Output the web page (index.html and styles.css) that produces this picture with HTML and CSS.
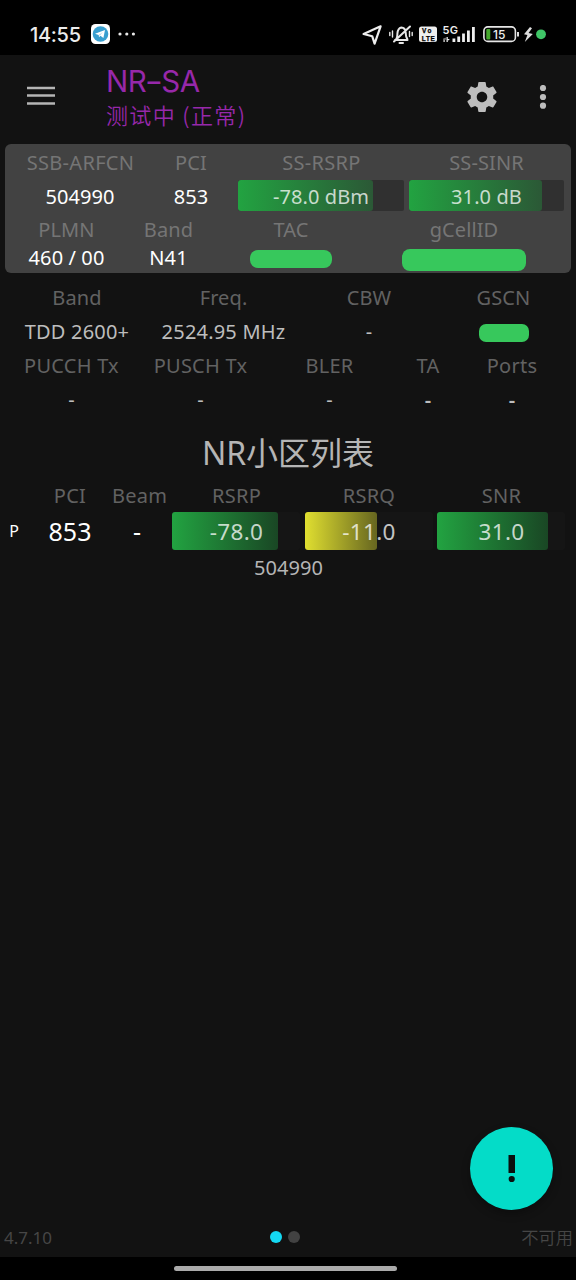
FILE: index.html
```html
<!DOCTYPE html>
<html lang="zh-CN">
<head>
<meta charset="utf-8">
<title>NR-SA</title>
<link rel="stylesheet" href="styles.css">
</head>
<body>
<div class="screen">
  <div class="status">
    <span class="clock">14:55</span>
    <svg class="tg" width="19" height="20" viewBox="0 0 19 20"><rect width="19" height="20" rx="4.5" fill="#fff"/><circle cx="9.5" cy="10" r="7.8" fill="#389fd0"/><path d="M4 9.8 14 5.900 12.400 14 9.400 11.800 8 13.200 7.700 11z" fill="#fff"/><path d="m7.800 11 4-3.100-3 3.600z" fill="#9fd0e8"/></svg>
    <svg class="more" width="18" height="4" viewBox="0 0 18 4"><g fill="#e8e8e8"><circle cx="2" cy="2" r="1.600"/><circle cx="8.800" cy="2" r="1.600"/><circle cx="15.400" cy="2" r="1.600"/></g></svg>
    <svg class="tray" width="188" height="24" viewBox="360 22 188 24">
      <path d="M380.600 26.300 363.600 34l8.600 2.200 2.400 7.400z" fill="none" stroke="#eee" stroke-width="2.200" stroke-linejoin="round"/>
      <g fill="none" stroke="#e6e6e6" stroke-width="2" stroke-linecap="round">
        <path d="M395 40h12.500M396 39.500c1.500-1.500 1.300-4 1.400-6 .3-3.400 1.700-5.500 3.900-6 2.400 0 4.200 2 4.400 5.500.1 2.500.3 4.500 1.600 6M394 41.500 410 26.500M399.500 43h3.500"/>
        <path d="M392.500 31v6M389.800 32.500v3M409.500 31.500v5M412.200 32.500v3" stroke-width="1.400"/>
      </g>
      <rect x="419" y="26.500" width="18" height="15.500" rx="2.500" fill="#eee"/>
      <text x="422" y="33.400" class="t-volte" textLength="9.500">Vo</text>
      <text x="421.800" y="41" class="t-volte" textLength="13">LTE</text>
      <text x="442.500" y="33.500" class="t-5g" textLength="15.500">5G</text>
      <g fill="#eee"><path d="M443.500 38.500h1.200v3.500h-1.200zM446.500 37h1.300v5h-1.300zM445.200 37.500l-1.500 2h2zM448.700 40.500l-2-1.500h3z"/>
      <rect x="452.500" y="38.500" width="2.800" height="3.500"/><rect x="457.300" y="36.500" width="2.800" height="5.500"/><rect x="462.100" y="33.500" width="2.800" height="8.500"/><rect x="467" y="30.500" width="2.800" height="11.500"/><rect x="472" y="27" width="2.800" height="15"/></g>
      <rect x="483.900" y="26.900" width="31.500" height="14.500" rx="4" fill="#050505" stroke="#e6e6e6" stroke-width="1.600"/>
      <rect x="486.300" y="29" width="4" height="10.500" rx="1" fill="#45a82c"/>
      <path d="M518 32v4.500" stroke="#ddd" stroke-width="2"/>
      <text x="493" y="38.600" class="t-bat" textLength="12.500">15</text>
      <path d="m530 27-6 7.200 3.400.8-2.600 7 8-8-4.200-1 3.400-4.800z" fill="#ddd"/>
      <circle cx="541" cy="34.300" r="4.900" fill="#3fc667"/>
    </svg>
  </div>

  <header class="bar">
    <svg class="menu" width="28" height="20" viewBox="0 0 28 20"><path d="M0 2h28M0 9.500h28M0 17.500h28" stroke="#b5b5b5" stroke-width="2.700"/></svg>
    <div class="titles">
      <div class="title">NR<span class="dash">-</span>SA</div>
      <div class="subtitle">测试中 (正常)</div>
    </div>
    <svg class="gear" width="36" height="36" viewBox="0 0 24 24"><path fill="#bdbdbd" d="M19.430 12.980c.04-.32.07-.64.07-.98s-.03-.66-.07-.98l2.110-1.650c.19-.15.24-.42.12-.64l-2-3.460c-.12-.22-.39-.3-.61-.22l-2.490 1c-.52-.4-1.080-.73-1.690-.98l-.38-2.650C14.460 2.180 14.250 2 14 2h-4c-.25 0-.46.18-.49.42l-.38 2.650c-.61.25-1.170.59-1.690.98l-2.490-1c-.23-.09-.49 0-.61.22l-2 3.460c-.13.22-.07.49.12.64l2.110 1.650c-.04.32-.07.65-.07.98s.03.66.07.98l-2.110 1.650c-.19.15-.24.42-.12.64l2 3.460c.12.22.39.3.61.22l2.490-1c.52.4 1.080.73 1.690.98l.38 2.650c.03.24.24.42.49.42h4c.25 0 .46-.18.49-.42l.38-2.650c.61-.25 1.170-.59 1.690-.98l2.490 1c.23.09.49 0 .61-.22l2-3.460c.12-.22.07-.49-.12-.64l-2.110-1.650zM12 15.500c-1.930 0-3.500-1.570-3.500-3.500s1.570-3.500 3.500-3.500 3.500 1.570 3.500 3.500-1.570 3.500-3.500 3.500z"/></svg>
    <svg class="dots" width="8" height="24" viewBox="0 0 8 24"><g fill="#bdbdbd"><circle cx="4" cy="3" r="3.100"/><circle cx="4" cy="12" r="3.100"/><circle cx="4" cy="20.700" r="3.100"/></g></svg>
  </header>

  <section class="card">
    <div class="row primary labels"><span class="wide">SSB-ARFCN</span><span>PCI</span><span class="wide">SS-RSRP</span><span>SS-SINR</span></div>
    <div class="row primary values">
      <span>504990</span><span>853</span>
      <div class="meter"><i class="fill green" style="width:81.500%"></i><b>-78.0 dBm</b></div>
      <div class="meter"><i class="fill green" style="width:86%"></i><b>31.0 dB</b></div>
    </div>
    <div class="row identity labels"><span>PLMN</span><span>Band</span><span>TAC</span><span>gCellID</span></div>
    <div class="row identity values short">
      <span>460 / 00</span><span>N41</span>
      <span><i class="mask tac"></i></span><span><i class="mask cell"></i></span>
    </div>
  </section>

  <section class="details">
    <div class="row radio labels"><span>Band</span><span>Freq.</span><span>CBW</span><span>GSCN</span></div>
    <div class="row radio values"><span>TDD 2600+</span><span>2524.95 MHz</span><span>-</span><span><i class="mask gscn"></i></span></div>
    <div class="row tx labels"><span>PUCCH Tx</span><span>PUSCH Tx</span><span>BLER</span><span>TA</span><span>Ports</span></div>
    <div class="row tx values"><span>-</span><span>-</span><span>-</span><span class="bold">-</span><span class="bold">-</span></div>
  </section>

  <h1 class="list-title">NR小区列表</h1>
  <section class="cells">
    <div class="row list labels"><span></span><span>PCI</span><span>Beam</span><span>RSRP</span><span>RSRQ</span><span>SNR</span></div>
    <div class="row list entry">
      <span class="tag">P</span><span>853</span><span>-</span>
      <div class="meter"><i class="fill green" style="width:82.500%"></i><b>-78.0</b></div>
      <div class="meter"><i class="fill yellow" style="width:56.500%"></i><b>-11.0</b></div>
      <div class="meter"><i class="fill green" style="width:86.500%"></i><b>31.0</b></div>
    </div>
    <div class="freq">504990</div>
  </section>

  <div class="fab"><svg width="10" height="28" viewBox="0 0 10 28"><rect x="1.500" width="6.500" height="18" fill="#0a0f0e"/><circle cx="4.700" cy="24" r="3.100" fill="#0a0f0e"/></svg></div>

  <footer class="foot">
    <span class="version">4.7.10</span>
    <span class="pages"><i class="on"></i><i></i></span>
    <span class="state">不可用</span>
  </footer>
  <div class="nav"><i></i></div>
</div>
</body>
</html>
```
FILE: styles.css
```css
* { box-sizing: border-box; }
body { margin: 0; background: #121212; font-family: "Noto Sans", "Noto Sans CJK SC", sans-serif; }
.screen { width: 576px; height: 1280px; display: flex; flex-direction: column; position: relative; background: #121212; overflow: hidden; }

.status { height: 55px; background: #000; display: flex; align-items: center; padding: 13px 28px 0 30px; flex: none; }
.clock { font: 500 20px/24px Inter, sans-serif; letter-spacing: -.3px; color: #ececec; width: 61px; padding-top: 1px; }
.more { margin-left: 8px; }
.tray { margin-left: auto; }
.t-volte { font: 700 6.400px "Liberation Sans", sans-serif; fill: #000; stroke: #000; stroke-width: .25px; }
.t-5g { font: 600 11px Inter, sans-serif; fill: #eee; }
.t-bat { font: 500 12px Inter, sans-serif; fill: #eee; }

.bar { height: 89px; display: flex; align-items: center; padding: 0 29px 6px 27px; flex: none; }
.menu { margin-top: -2px; }
.titles { margin-left: 50px; color: #9728aa; }
.title { font: 400 29.500px/36px Inter, sans-serif; margin-top: -1px; padding-left: 1px; white-space: nowrap; letter-spacing: -.5px; }
.dash { display: inline-block; transform: scaleX(1.350); margin: 0 1px; }
.subtitle { font: 350 22px/30px "Noto Sans CJK SC", sans-serif; letter-spacing: 1.350px; padding-left: 1px; }
.gear { margin-left: auto; }
.dots { margin-left: 39px; }

.card { margin: 0 5px; height: 129px; background: #424242; border-radius: 6px; flex: none; }
.row { display: grid; text-align: center; font-size: 20px; white-space: nowrap; }
.labels { color: #757575; line-height: 36px; letter-spacing: .1px; }
.labels span { padding-top: 1px; margin-bottom: -1px; }
.labels .wide { letter-spacing: .3px; padding-left: 1px; }
.values { color: #fff; line-height: 31px; letter-spacing: .1px; }
.primary { grid-template-columns: 150px 72px 11px 166px 5px 155px; }
.primary > :nth-child(3) { grid-column: 4; }
.primary > :nth-child(4) { grid-column: 6; }
.primary.values { line-height: 33px; height: 31px; }
.identity { grid-template-columns: 123px 80px 166px 180px; }
.identity > :nth-child(2) { padding-left: 1px; }
.short { line-height: 22px; }
.meter { position: relative; background: #303030; border-radius: 2px; height: 31px; }
.meter b { position: relative; font-weight: 400; color: rgba(255, 255, 255, .75); }
.fill { position: absolute; left: 0; top: 0; height: 100%; border-radius: 3px; }
.green { background: linear-gradient(90deg, #22a341, rgba(34, 163, 65, .35)); }
.yellow { background: linear-gradient(90deg, #e0df30, rgba(224, 223, 48, .4)); }
.mask { display: block; background: #37c85c; margin: 0 auto; }
.tac { width: 82px; height: 18px; border-radius: 8px; margin-top: 3px; }
.cell { width: 124px; height: 22px; border-radius: 8px; margin-top: 2px; }
.gscn { width: 50px; height: 18px; border-radius: 7px; margin-top: 10px; }

.details { margin-top: 7px; flex: none; }
.details .row { line-height: 36px; height: 34px; }
.details .labels span { padding: 0; margin: 0; }
.details .labels, .cells .labels { color: #626262; }
.details .values { color: #bdbdbd; letter-spacing: .2px; }
.radio { grid-template-columns: 154px 139px 152px 117px; }
.tx { grid-template-columns: 129px 129px 129px 68px 100px; padding-left: 7px; }
.tx.labels { letter-spacing: .25px; }
.bold { font-weight: 600; }

.list-title { margin: 13px 0 0; height: 49px; font-size: 32px; line-height: 48px; font-weight: 400; color: #b5b5b5; text-align: center; flex: none; }
.cells { flex: none; }
.list { grid-template-columns: 28px 84px 50px 10px 128px 4.500px 128px 4.500px 128px; }
.list > :nth-child(4) { grid-column: 5; }
.list > :nth-child(5) { grid-column: 7; }
.list > :nth-child(6) { grid-column: 9; }
.cells .labels { height: 33.500px; line-height: 34px; letter-spacing: .25px; }
.cells .labels > :nth-child(n+4) { padding-left: 1px; }
.entry { line-height: 39px; font-size: 25px; color: #fff; }
.entry .tag { font-size: 16px; }
.entry .meter { height: 38.500px; background: #151515; font-size: 22.500px; line-height: 40px; letter-spacing: .3px; }
.entry b { left: .5px; }
.freq { text-align: center; font-size: 20px; line-height: 34px; color: #b5b5b5; letter-spacing: .1px; padding-left: 1px; }

.fab { position: absolute; left: 470px; top: 1127px; width: 83px; height: 83px; border-radius: 50%; background: #04dcc8; box-shadow: 0 4px 8px rgba(0, 0, 0, .3); display: flex; align-items: center; justify-content: center; }
.foot { margin-top: auto; height: 40px; display: grid; grid-template-columns: 1fr auto 1fr; align-items: center; padding: 0 3px 0 4px; font-size: 17px; color: #464646; flex: none; }
.pages { display: flex; gap: 6px; padding-right: 7px; }
.pages i { width: 12px; height: 12px; border-radius: 50%; background: #424242; }
.pages .on { background: #14d8f2; }
.state { text-align: right; font: 350 17.300px/24px "Noto Sans CJK SC", sans-serif; }
.nav { height: 23px; background: #000; display: flex; align-items: center; justify-content: center; flex: none; }
.nav i { width: 223px; height: 5.500px; border-radius: 3px; background: #aaa; margin-right: 5px; }
```
